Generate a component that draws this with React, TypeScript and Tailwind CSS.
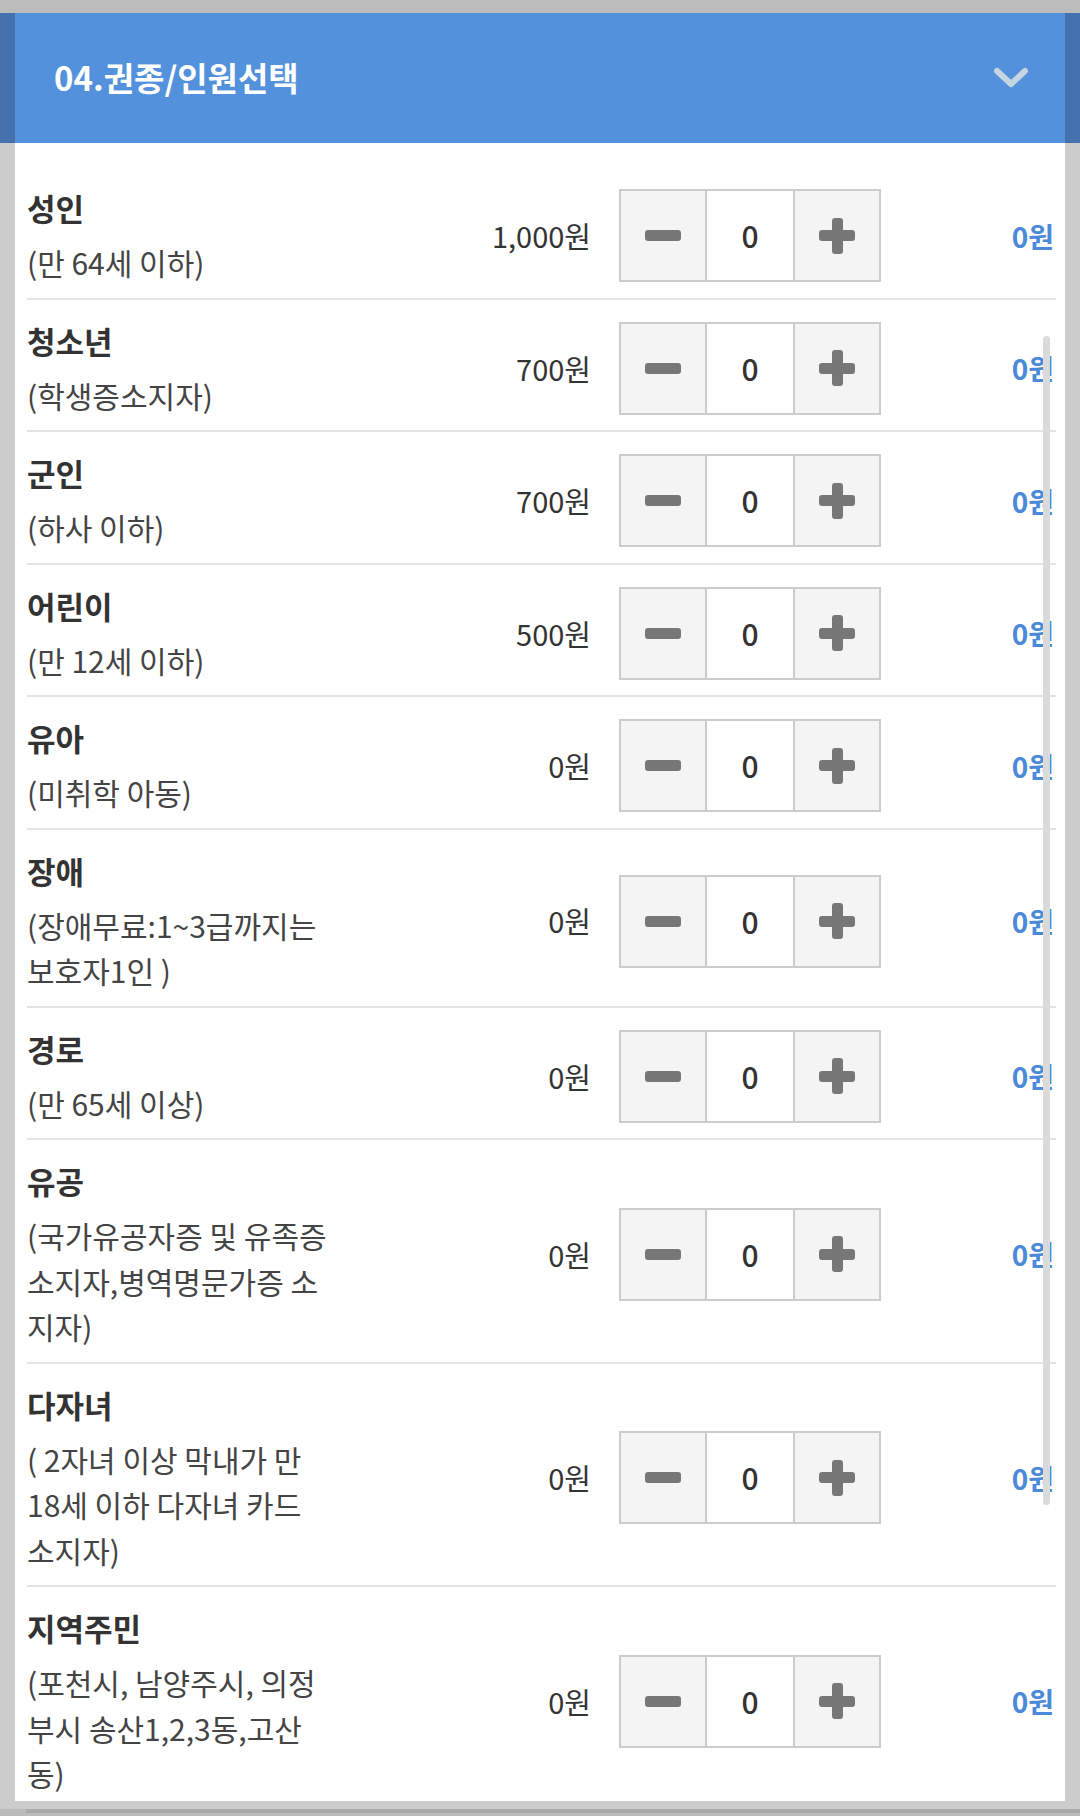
import React from "react";

type Row = { title: string; sub: string[]; price: string };

const rows: Row[] = [
  { title: "성인", sub: ["(만 64세 이하)"], price: "1,000원" },
  { title: "청소년", sub: ["(학생증소지자)"], price: "700원" },
  { title: "군인", sub: ["(하사 이하)"], price: "700원" },
  { title: "어린이", sub: ["(만 12세 이하)"], price: "500원" },
  { title: "유아", sub: ["(미취학 아동)"], price: "0원" },
  { title: "장애", sub: ["(장애무료:1~3급까지는", "보호자1인 )"], price: "0원" },
  { title: "경로", sub: ["(만 65세 이상)"], price: "0원" },
  { title: "유공", sub: ["(국가유공자증 및 유족증", "소지자,병역명문가증 소", "지자)"], price: "0원" },
  { title: "다자녀", sub: ["( 2자녀 이상 막내가 만", "18세 이하 다자녀 카드", "소지자)"], price: "0원" },
  { title: "지역주민", sub: ["(포천시, 남양주시, 의정", "부시 송산1,2,3동,고산", "동)"], price: "0원" },
];

const font = { fontFamily: '"Noto Sans CJK KR", "Noto Sans", sans-serif' };

function Stepper() {
  return (
    <div className="flex h-[93px] w-[262px] shrink-0 border-2 border-[#cccccc]">
      <div className="flex w-[84px] items-center justify-center bg-[#f4f4f4]">
        <div className="h-[11px] w-[36px] rounded-[3px] bg-[#777777]" />
      </div>
      <div className="flex w-[90px] items-center justify-center border-x-2 border-[#cccccc] bg-white text-[30px] font-medium text-[#333333]">
        0
      </div>
      <div className="flex flex-1 items-center justify-center bg-[#f4f4f4]">
        <div className="relative h-[36px] w-[36px]">
          <div className="absolute left-0 top-[12.5px] h-[11px] w-[36px] rounded-[3px] bg-[#777777]" />
          <div className="absolute left-[12.5px] top-0 h-[36px] w-[11px] rounded-[3px] bg-[#777777]" />
        </div>
      </div>
    </div>
  );
}

export default function App() {
  return (
    <div className="relative h-[1816px] w-[1080px] overflow-hidden bg-[#cccccc]" style={font}>
      <div className="h-[13px] bg-[#bcbcbc]" />
      <div className="flex h-[130px]">
        <div className="w-[15px] bg-[#4572ad]" />
        <div className="flex flex-1 items-center justify-between bg-[#5491dc] pl-[39px] pr-[36px]">
          <span className="text-[33px] font-bold text-white">04.권종/인원선택</span>
          <svg width="36" height="24" viewBox="0 0 36 24">
            <path d="M4 5 L18 18 L32 5" fill="none" stroke="#c6d5e2" strokeWidth="6" strokeLinecap="round" strokeLinejoin="round" />
          </svg>
        </div>
        <div className="w-[15px] bg-[#4572ad]" />
      </div>
      <div className="mx-[15px] h-[1658px] bg-white pl-[12px] pr-[9px] pt-[24px]">
        {rows.map((r, i) => (
          <div
            key={r.title}
            className={`flex items-center ${i < rows.length - 1 ? "border-b-2 border-[#e3e3e3] pb-[12px]" : ""} pt-[19px]`}
          >
            <div className="w-[310px] shrink-0">
              <div className="mb-[10px] text-[31px] font-bold leading-[44px] text-[#333333]">{r.title}</div>
              {r.sub.map((s) => (
                <div key={s} className="whitespace-nowrap text-[30px] leading-[45.5px] text-[#444444]">
                  {s}
                </div>
              ))}
            </div>
            <div className="w-[254px] shrink-0 text-right text-[29px] text-[#333333]">{r.price}</div>
            <div className="ml-[28px]">
              <Stepper />
            </div>
            <div className="flex-1 pr-[2px] text-right text-[28px] font-bold text-[#4a8ad8]">0원</div>
          </div>
        ))}
      </div>
      <div className="absolute left-[1043px] top-[336px] h-[1169px] w-[7px] rounded-full bg-[#dadada]" />
      <div className="absolute bottom-0 left-0 right-0 h-[7px] bg-[#bbbbbb]">
        <div className="ml-[26px] h-[4px] bg-[#a9a9a9]" />
      </div>
    </div>
  );
}
